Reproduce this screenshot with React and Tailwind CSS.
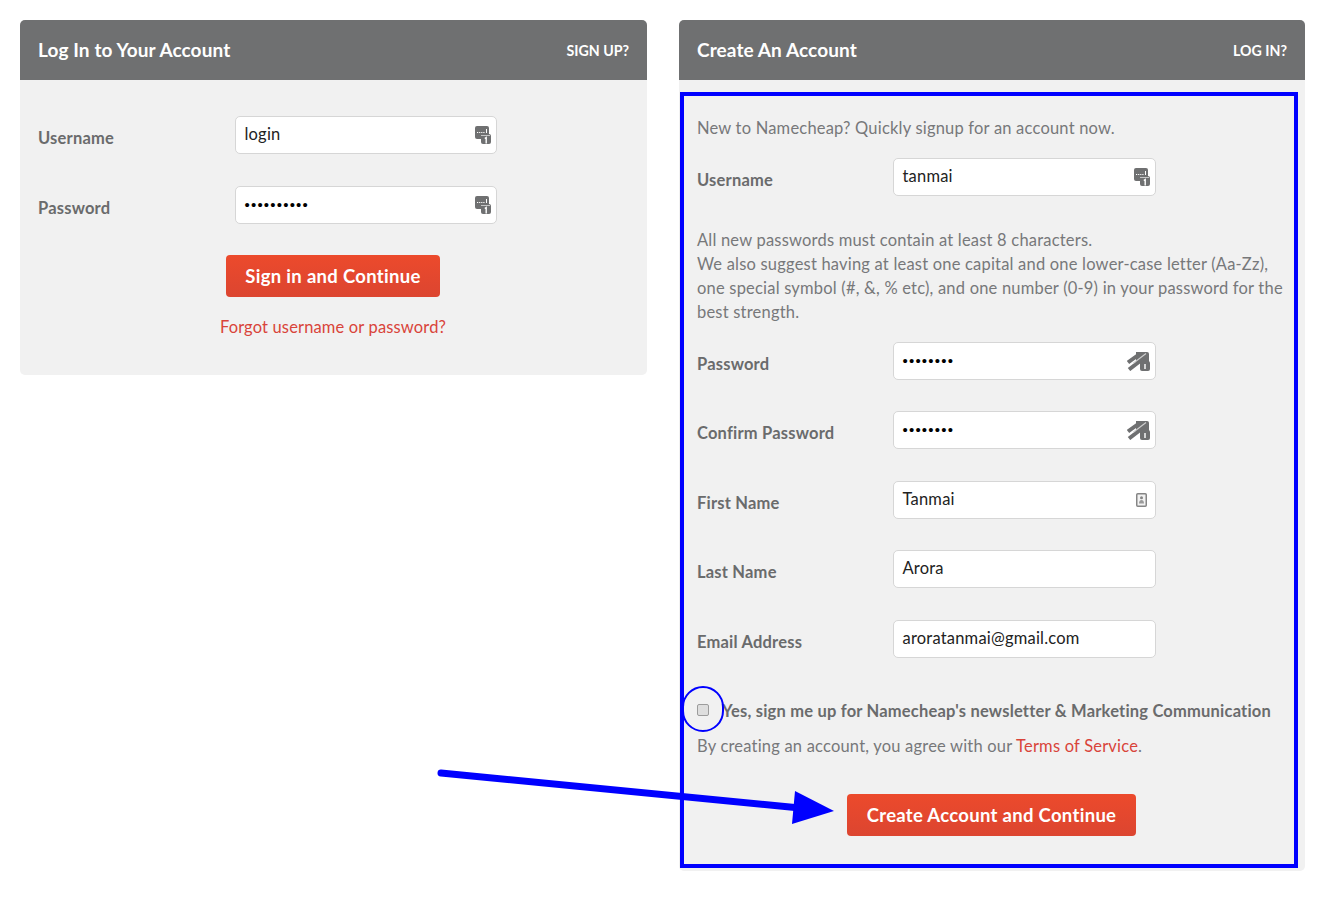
import React from 'react';

const KeyIcon = () => (
  <svg width="16" height="18" viewBox="0 0 16 18" className="absolute right-[5px] top-[9px]">
    <rect x="0" y="0" width="14" height="13" rx="2" fill="#6f7071" />
    <path d="M2 6.5h8" stroke="#fff" strokeWidth="1.2" strokeDasharray="1.2 0.9" fill="none" />
    <path d="M11.5 3v4" stroke="#fff" strokeWidth="1" fill="none" />
    <rect x="6" y="8" width="10" height="10" rx="2" fill="#6f7071" />
    <path d="M6 9.5h9" stroke="#dcdcdc" strokeWidth="0.8" fill="none" />
    <path d="M9.8 12.5l1.4-1v6" stroke="#fff" strokeWidth="1.4" fill="none" />
  </svg>
);

const KeySlashIcon = () => (
  <svg width="23" height="19" viewBox="0 0 23 19" className="absolute right-[5px] top-[9px]">
    <path d="M9 0h11a2 2 0 0 1 2 2v9H9z" fill="#6f7071" />
    <path d="M1 10.5L12 2.5M2 17.5L17 6" stroke="#6f7071" strokeWidth="4" fill="none" />
    <path d="M6 11.5L19 1.5" stroke="#cfcfcf" strokeWidth="1.1" fill="none" />
    <rect x="13" y="9" width="10" height="10" rx="2" fill="#6f7071" />
    <path d="M18 12v5" stroke="#fff" strokeWidth="1.4" fill="none" />
  </svg>
);

const ContactIcon = () => (
  <svg width="11" height="14" viewBox="0 0 11 14" className="absolute right-[8px] top-[11px]">
    <rect x="0.75" y="0.75" width="9.5" height="12.5" rx="1" fill="#f2f2f2" stroke="#858585" strokeWidth="1.5" />
    <circle cx="5.5" cy="4.8" r="1.5" fill="#858585" />
    <path d="M3 10.5c0-2.6 1.2-3.6 2.5-3.6S8 7.900 8 10.500z" fill="#9a9a9a" />
  </svg>
);

const Field = ({ value, password, icon, width }) => (
  <div className={`relative ${width || 'w-[263px]'} h-[38px] shrink-0 bg-white border border-[#d6d6d6] rounded-[5px]`}>
    {password ? (
      <div className="pl-[8.5px] leading-[36px] font-['Liberation_Sans'] text-[15px] tracking-[1.2px] text-black">
        {'•'.repeat(value)}
      </div>
    ) : (
      <div className="pl-[8.5px] leading-[35px] text-[16.5px] tracking-[0.2px] text-[#222]">{value}</div>
    )}
    {icon}
  </div>
);

const Row = ({ label, labelWidth, className, ...rest }) => (
  <div className={`flex items-center ${className || ''}`}>
    <div className={`${labelWidth} pt-[6px] text-[16.5px] tracking-[0.2px] font-bold text-[#6a6b6c]`}>{label}</div>
    <Field {...rest} />
  </div>
);

const Header = ({ title, link }) => (
  <div className="flex items-center justify-between h-[60px] px-[18px] bg-[#6f7071] rounded-t-[5px] text-white font-bold">
    <div className="text-[19px] tracking-[0.1px]">{title}</div>
    <div className="text-[14.2px] pt-[2px]">{link}</div>
  </div>
);

const SubmitButton = ({ children, className }) => (
  <button className={`h-[42px] pt-[2px] rounded-[4px] bg-gradient-to-b from-[#ec4a2c] to-[#dc4530] text-white text-[18.5px] tracking-[0.3px] font-bold ${className}`}>
    {children}
  </button>
);

export default function App() {
  return (
    <div className="relative w-[1324px] h-[904px] bg-white overflow-hidden font-['Lato',sans-serif]">
      <div className="flex items-start gap-[32px] pt-[20px] pl-[20px]">
        {/* Log in */}
        <section className="w-[627px] h-[355px] bg-[#f1f1f1] rounded-[5px]">
          <Header title="Log In to Your Account" link="SIGN UP?" />
          <div className="pl-[18px] pt-[36px]">
            <Row label="Username" labelWidth="w-[197px]" width="w-[262px]" value="login" icon={<KeyIcon />} />
            <Row label="Password" labelWidth="w-[197px]" width="w-[262px]" className="mt-[32px]" value={10} password icon={<KeyIcon />} />
          </div>
          <div className="flex flex-col items-center pr-[1px]">
            <SubmitButton className="mt-[31px] w-[214px]">Sign in and Continue</SubmitButton>
            <a className="mt-[18px] text-[16.5px] tracking-[0.15px] text-[#d9443a]">Forgot username or password?</a>
          </div>
        </section>

        {/* Create account */}
        <section className="w-[626px] h-[851px] bg-[#f1f1f1] rounded-[5px]">
          <Header title="Create An Account" link="LOG IN?" />
          <div className="pl-[18px] pr-[20px] text-[16.5px] tracking-[0.2px]">
            <p className="pt-[36px] leading-[24px] text-[#77787a]">New to Namecheap? Quickly signup for an account now.</p>
            <Row label="Username" labelWidth="w-[196px]" className="mt-[18px]" value="tanmai" icon={<KeyIcon />} />
            <p className="mt-[32px] leading-[24px] text-[#77787a]">
              All new passwords must contain at least 8 characters.<br />
              We also suggest having at least one capital and one lower-case letter (Aa-Zz), one special symbol (#, &amp;, % etc), and one number (0-9) in your password for the best strength.
            </p>
            <Row label="Password" labelWidth="w-[196px]" className="mt-[18px]" value={8} password icon={<KeySlashIcon />} />
            <Row label="Confirm Password" labelWidth="w-[196px]" className="mt-[31px]" value={8} password icon={<KeySlashIcon />} />
            <Row label="First Name" labelWidth="w-[196px]" className="mt-[32px]" value="Tanmai" icon={<ContactIcon />} />
            <Row label="Last Name" labelWidth="w-[196px]" className="mt-[31px]" value="Arora" />
            <Row label="Email Address" labelWidth="w-[196px]" className="mt-[32px]" value="aroratanmai@gmail.com" />
            <div className="flex items-center mt-[41px] h-[24px]">
              <input type="checkbox" className="appearance-none w-[12px] h-[12px] mr-[13px] -mt-[3px] bg-[#dedede] border border-[#9c9c9c] rounded-[2px]" />
              <span className="pt-[1px] font-bold text-[#6a6b6c]">Yes, sign me up for Namecheap's newsletter &amp; Marketing Communication</span>
            </div>
            <p className="mt-[11px] leading-[24px] text-[#77787a]">
              By creating an account, you agree with our <a className="text-[#d9443a]">Terms of Service</a>.
            </p>
            <div className="flex justify-end pr-[149px] mt-[36px]">
              <SubmitButton className="w-[289px]">Create Account and Continue</SubmitButton>
            </div>
          </div>
        </section>
      </div>

      {/* blue annotations drawn over the screenshot */}
      <div className="absolute left-[680px] top-[92px] w-[618px] h-[776px] border-[4px] border-[#0000ff]" />
      <div className="absolute left-[682px] top-[686px] w-[42px] h-[46px] rounded-full border-2 border-[#0000ff]" />
      <svg className="absolute left-0 top-0 pointer-events-none" width="1324" height="904">
        <path d="M441 773L800 808" stroke="#0000ff" strokeWidth="7" strokeLinecap="round" fill="none" />
        <polygon points="795,791 834,811 792,824" fill="#0000ff" />
      </svg>
    </div>
  );
}
